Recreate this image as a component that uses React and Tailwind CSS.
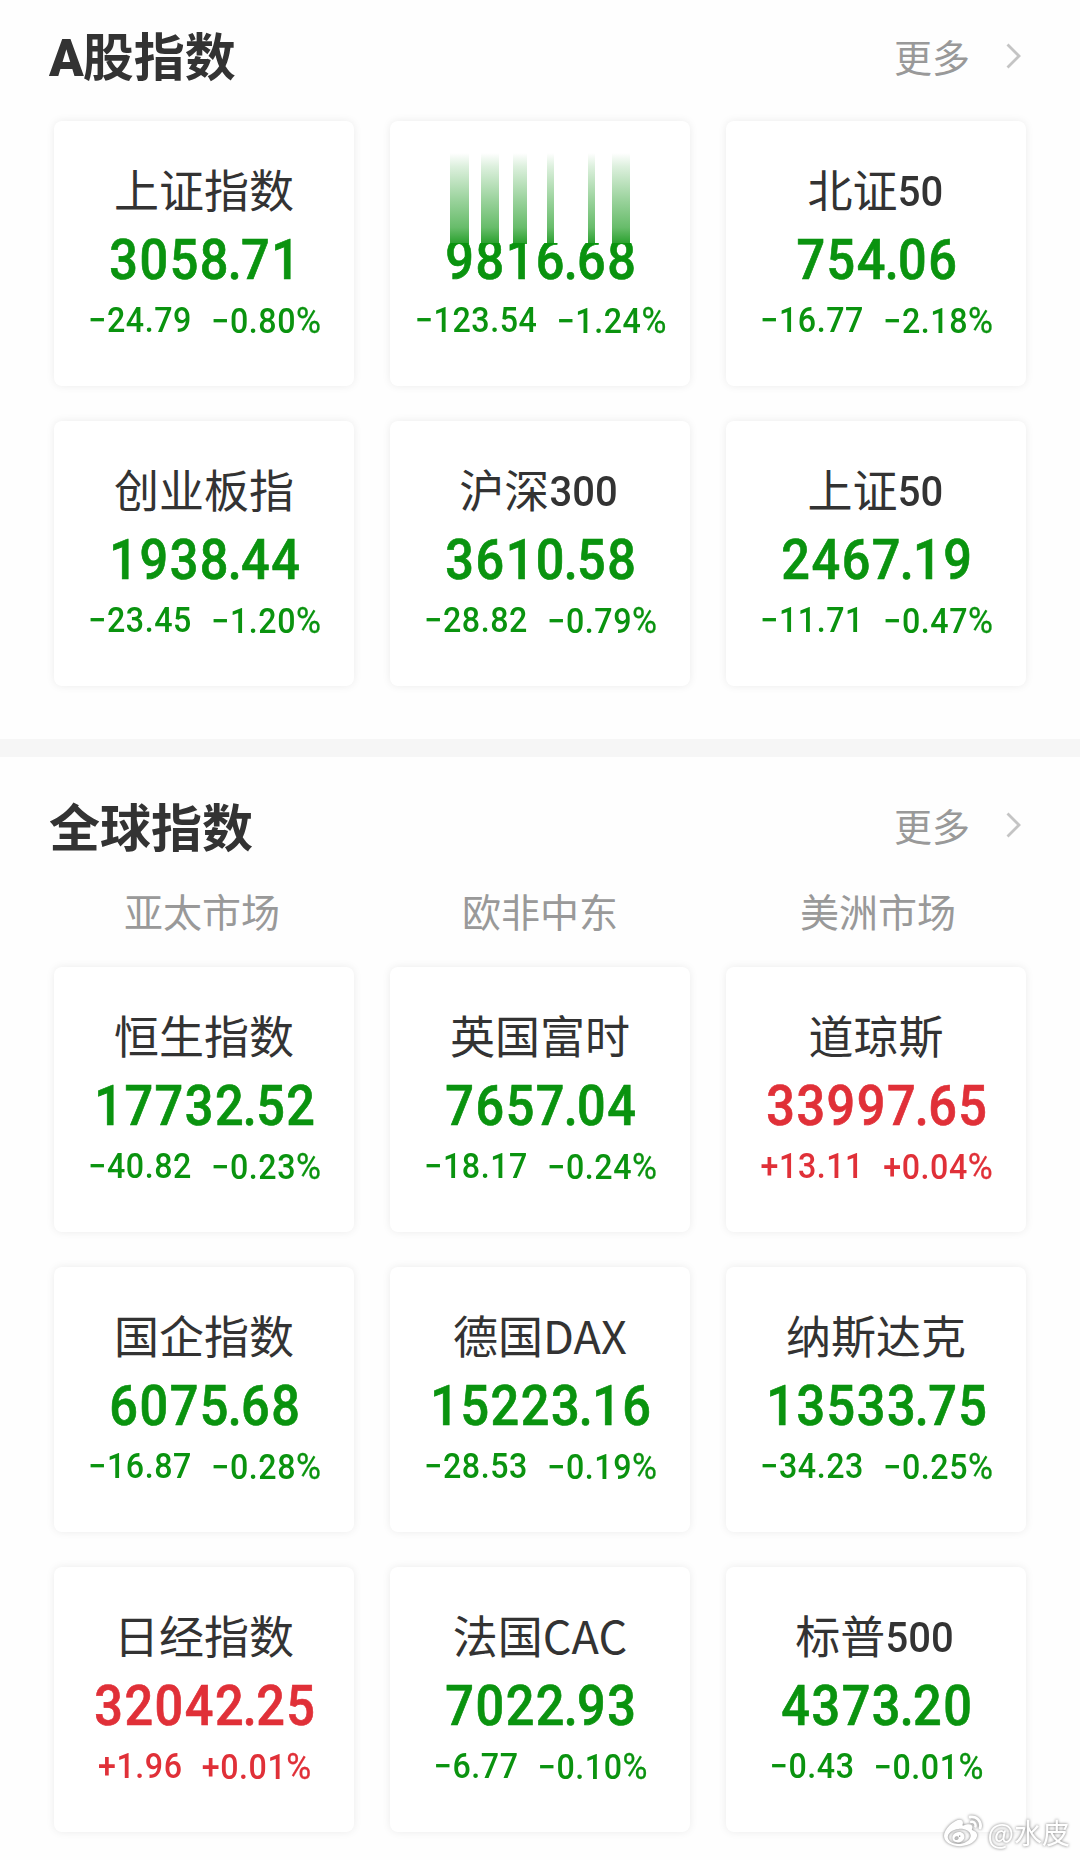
import React from 'react';
import { FaWeibo } from 'react-icons/fa';

const aShareIndexes = [
  { name: '上证指数', price: '3058.71', change: '−24.79', percent: '−0.80' },
  { name: '', price: '9816.68', change: '−123.54', percent: '−1.24', rising: true },
  { name: '北证', digits: '50', price: '754.06', change: '−16.77', percent: '−2.18' },
  { name: '创业板指', price: '1938.44', change: '−23.45', percent: '−1.20' },
  { name: '沪深', digits: '300', price: '3610.58', change: '−28.82', percent: '−0.79' },
  { name: '上证', digits: '50', price: '2467.19', change: '−11.71', percent: '−0.47' },
];

const globalIndexes = [
  { name: '恒生指数', price: '17732.52', change: '−40.82', percent: '−0.23' },
  { name: '英国富时', price: '7657.04', change: '−18.17', percent: '−0.24' },
  { name: '道琼斯', price: '33997.65', change: '+13.11', percent: '+0.04', up: true },
  { name: '国企指数', price: '6075.68', change: '−16.87', percent: '−0.28' },
  { name: '德国DAX', price: '15223.16', change: '−28.53', percent: '−0.19' },
  { name: '纳斯达克', price: '13533.75', change: '−34.23', percent: '−0.25' },
  { name: '日经指数', price: '32042.25', change: '+1.96', percent: '+0.01', up: true },
  { name: '法国CAC', price: '7022.93', change: '−6.77', percent: '−0.10' },
  { name: '标普', digits: '500', price: '4373.20', change: '−0.43', percent: '−0.01' },
];

const markets = ['亚太市场', '欧非中东', '美洲市场'];

// Light trails above the digits of the refreshing card
const trails = [
  { left: 60, width: 19 },
  { left: 91, width: 18 },
  { left: 123, width: 14 },
  { left: 157, width: 7 },
  { left: 198, width: 7 },
  { left: 222, width: 18 },
];

function SectionHeader({ prefix, title }) {
  return (
    <div className="flex items-center justify-between pl-[49px] pr-[59px] h-16">
      <h2 className="text-[51px] leading-[64px] font-bold text-[#333333]">
        {prefix && <span className="font-[Roboto] font-black tracking-[-1px]">{prefix}</span>}
        {title}
      </h2>
      <div className="flex items-center gap-9">
        <span className="text-[38px] leading-[48px] text-[#999999]">更多</span>
        <svg className="w-[15px] h-[26px]" viewBox="0 0 15 26" fill="none" stroke="#c4c4c4" strokeWidth="2.8">
          <path d="M1.5 1.5L13 13L1.5 24.5" />
        </svg>
      </div>
    </div>
  );
}

// The decimal point sits tighter than the digits around it
function Price({ value }) {
  const [whole, fraction] = value.split('.');
  return (
    <>
      {whole}
      <span className="-mx-[2.5px]">.</span>
      {fraction}
    </>
  );
}

function IndexCard({ item }) {
  const color = item.up ? 'text-[#e03038]' : 'text-[#0a930f]';

  return (
    <div className="relative h-[265px] pt-[38px] bg-white rounded-lg shadow-[0_0_9px_rgba(0,0,0,0.08)] text-center whitespace-nowrap">
      <div className="h-[60px] text-[45px] leading-[60px] text-[#333333]">
        {item.name}
        {item.digits && (
          <span className="inline-block scale-x-[0.93] -ml-[2px] align-[2px] leading-[40px] font-[Roboto] font-medium text-[43px]">
            {item.digits}
          </span>
        )}
      </div>
      <div
        className={`mt-[9px] pl-[3px] scale-x-90 font-[Roboto] font-medium text-[56px] leading-[64px] tracking-[1.7px] [-webkit-text-stroke:0.7px_currentColor] ${color} ${
          item.rising ? '[clip-path:inset(15px_0_0_0)]' : ''
        }`}
      >
        <Price value={item.price} />
      </div>
      <div className={`mt-[9px] pl-[2px] scale-x-[0.92] flex justify-center gap-[21px] font-[Roboto] font-medium text-[35px] leading-[40px] tracking-[0.6px] ${color}`}>
        <span>{item.change}</span>
        <span>
          {item.percent}
          <span className="font-normal text-[37px] [-webkit-text-stroke:0.3px_currentColor]">%</span>
        </span>
      </div>
      {item.rising &&
        trails.map((trail) => (
          <span
            key={trail.left}
            className="absolute top-[32px] h-[91px] bg-[linear-gradient(to_top,rgba(10,147,15,0.88),rgba(10,147,15,0.62)_18%,rgba(10,147,15,0.4)_50%,rgba(10,147,15,0.14)_85%,transparent)]"
            style={{ left: trail.left, width: trail.width }}
          />
        ))}
    </div>
  );
}

function CardGrid({ items }) {
  return (
    <div className="grid grid-cols-3 gap-x-9 gap-y-[35px] px-[54px]">
      {items.map((item) => (
        <IndexCard key={item.price} item={item} />
      ))}
    </div>
  );
}

export default function App() {
  return (
    <main className="relative w-[1080px] h-[1860px] overflow-hidden bg-[#fefefe] font-['Noto_Sans_CJK_SC',sans-serif]">
      {/* A shares */}
      <section className="h-[739px] pt-[24px]">
        <SectionHeader prefix="A" title="股指数" />
        <div className="mt-[33px]">
          <CardGrid items={aShareIndexes} />
        </div>
      </section>

      <div className="h-[18px] bg-[#f6f6f6]" />

      {/* Global markets */}
      <section className="pt-[36px]">
        <SectionHeader title="全球指数" />
        <div className="grid grid-cols-3 px-[33px] mt-[29px] mb-[33px] text-center text-[39px] leading-[48px] text-[#999999]">
          {markets.map((market) => (
            <span key={market}>{market}</span>
          ))}
        </div>
        <CardGrid items={globalIndexes} />
      </section>

      {/* Watermark */}
      <div className="absolute right-[10px] bottom-[8px] flex items-center gap-[6px] text-white drop-shadow-[0_0_1.5px_rgba(0,0,0,0.55)]">
        <FaWeibo className="w-[38px] h-[38px]" />
        <span className="text-[28px] leading-[40px]">@水皮</span>
      </div>
    </main>
  );
}
